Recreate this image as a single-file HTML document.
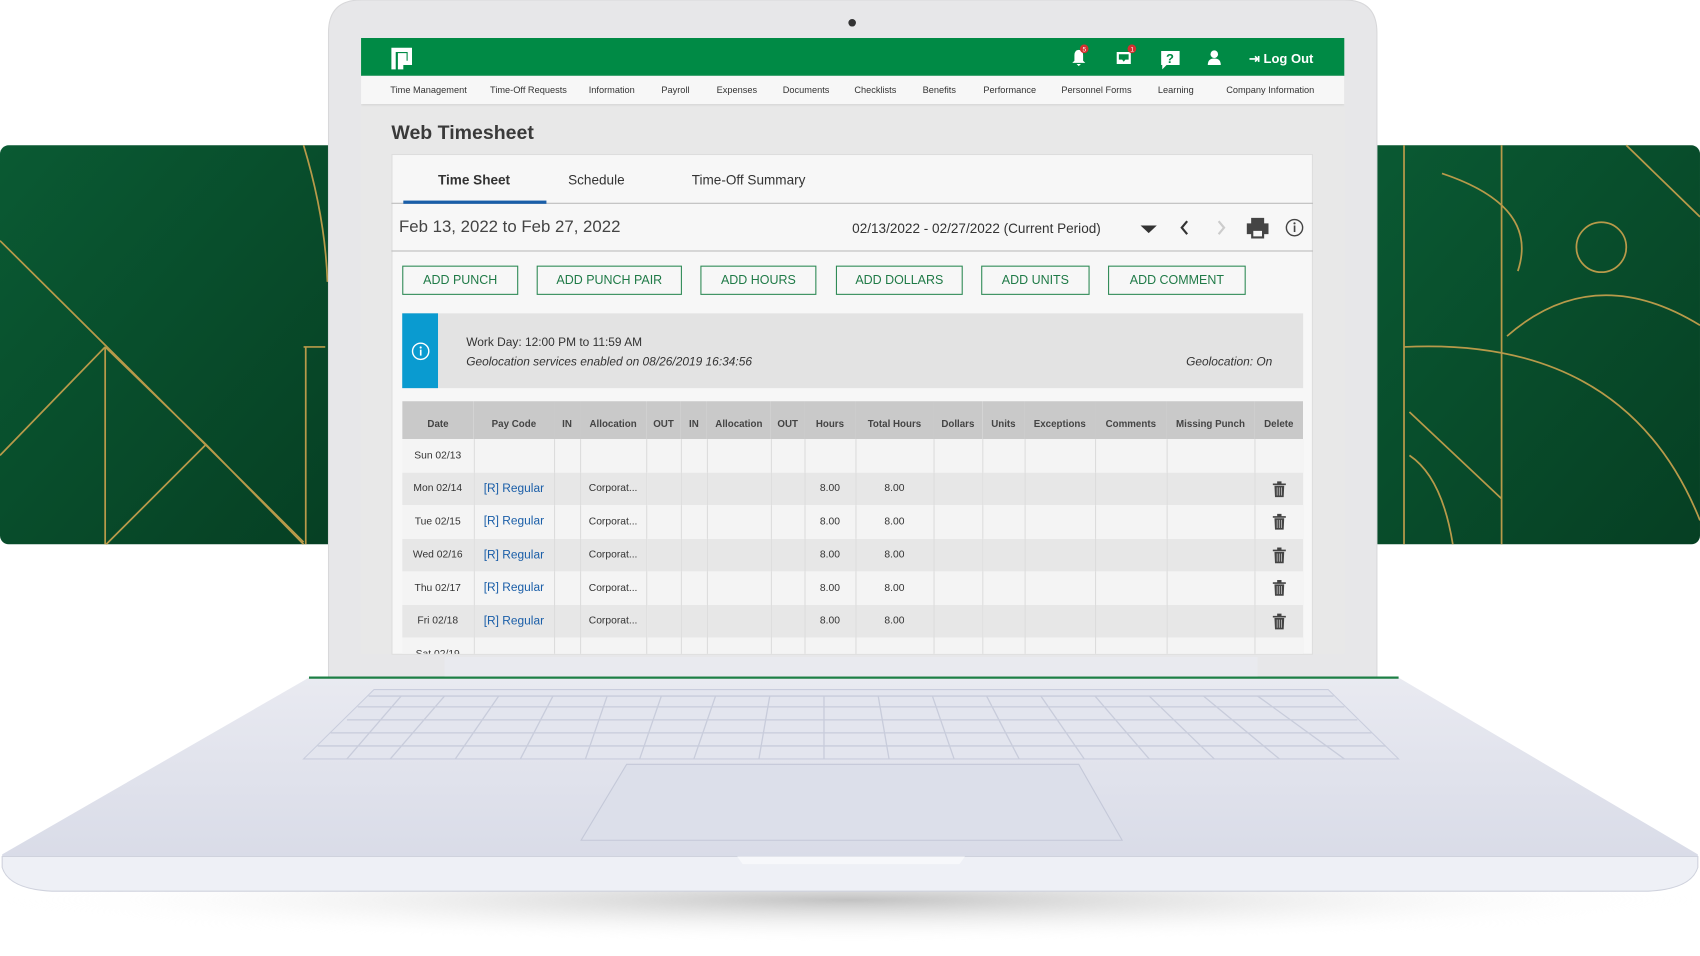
<!DOCTYPE html>
<html><head><meta charset="utf-8"><style>
html,body{margin:0;padding:0;background:#fff;overflow:hidden}
body{width:1700px;height:956px;position:relative}
#w{position:absolute;left:0;top:0;width:1568px;height:882px;transform:scale(1.08418);transform-origin:0 0;font-family:"Liberation Sans",Arial,sans-serif;color:#333}
.a{position:absolute}
.nav span{position:absolute;top:0;font-size:8.5px;color:#333;white-space:nowrap}
.btn{position:absolute;top:245px;height:27px;border:1px solid #2e8a55;box-sizing:border-box;color:#1f7a47;font-size:11.5px;text-align:center;line-height:26px;background:#f7f7f7}
table{border-collapse:collapse;position:absolute;left:371px;top:370px;width:831px;table-layout:fixed;font-size:9.5px}
td,th{border-right:1px solid #dcdcdc;padding:0;text-align:center;white-space:nowrap;overflow:hidden}
th{background:#c9c9c9;height:28px;font-weight:bold;color:#444;font-size:9px;border-right:none;padding-top:7px;box-sizing:content-box}
tr.o td{background:#f4f4f4}tr.e td{background:#e7e7e7}
td{height:30.5px;color:#333}
td.l{color:#1a5ea8;font-size:11px}
.t{display:inline-block;vertical-align:middle}
</style></head><body><div id="w">
<svg class="a" style="left:0;top:0" width="1568" height="882">
<defs>
<linearGradient id="g" x1="0" y1="0" x2="1" y2="1"><stop offset="0" stop-color="#0a5a33"/><stop offset="1" stop-color="#063f23"/></linearGradient>
<linearGradient id="b" x1="0" y1="0" x2="0" y2="1"><stop offset="0" stop-color="#e9eaf1"/><stop offset="1" stop-color="#d6d9e6"/></linearGradient>
<radialGradient id="sh" cx="0.5" cy="0.5" r="0.5"><stop offset="0" stop-color="#999" stop-opacity=".6"/><stop offset="1" stop-color="#fff" stop-opacity="0"/></radialGradient>
</defs>
<rect x="0" y="134" width="320" height="368" rx="8" fill="url(#g)"/>
<rect x="1250" y="134" width="318" height="368" rx="8" fill="url(#g)"/>
<g stroke="#b89a4a" stroke-width="1.6" fill="none">
<path d="M0 222 L280 500 M97 320 L97 502 M0 420 L97 320 M97 320 L190 410 L98 502 M190 410 L280 502 M280 320 L300 320 M282 320 L282 502 M280 134 Q300 200 302 260"/>
<path d="M1295 134 L1295 502 M1385 134 L1385 502 M1295 320 Q1500 310 1568 480 M1300 380 L1385 460 M1390 310 Q1470 240 1568 300 M1330 160 Q1420 190 1400 250 M1300 420 Q1330 440 1340 502 M1500 134 L1568 200"/>
<circle cx="1477" cy="228" r="23"/>
</g>
<ellipse cx="784" cy="830" rx="780" ry="40" fill="url(#sh)"/>
<path d="M303 30 Q303 0 333 0 L1240 0 Q1270 0 1270 30 L1270 625 L303 625 Z" fill="#e7e7e9" stroke="#d8d8da"/>
<circle cx="786" cy="21" r="3.5" fill="#333"/>
<path d="M285 625 L1290 625 L1566 788 L1566 800 Q1560 820 1520 822 L48 822 Q8 820 2 800 L2 788 Z" fill="url(#b)"/>
<path d="M2 790 L1566 790 L1566 800 Q1560 820 1520 822 L48 822 Q8 820 2 800 Z" fill="#eef0f6" stroke="#cfd2dd"/>
<path d="M680 790 L890 790 L885 797 L685 797 Z" fill="#f7f8fb"/>
<path d="M285 625 L1290 625" stroke="#1d7f45" stroke-width="2"/>
<rect x="410" y="606" width="750" height="18" fill="#e9eaef"/>
<path d="M345 636 L1225 636 L1290 700 L280 700 Z" fill="#e3e5ee" stroke="#c9cddd"/>
<g stroke="#c8ccdb" stroke-width="1.2">
<path d="M340 642 L1230 642 M330 652 L1240 652 M320 664 L1252 664 M305 676 L1265 676 M293 688 L1278 688"/>
<path d="M370 642 L320 700 M410 642 L360 700 M460 642 L420 700 M510 642 L480 700 M560 642 L540 700 M610 642 L590 700 M660 642 L640 700 M710 642 L700 700 M760 642 L760 700 M810 642 L820 700 M860 642 L880 700 M910 642 L940 700 M960 642 L1000 700 M1010 642 L1060 700 M1060 642 L1120 700 M1110 642 L1180 700 M1160 642 L1240 700"/>
</g>
<path d="M578 705 L995 705 L1035 775 L536 775 Z" fill="#dcdfea" stroke="#c4c8d8"/>
</svg>
<div class="a" style="left:333px;top:35px;width:907px;height:568px;background:#e8e8e8;overflow:hidden">
 <div class="a" style="left:0;top:0;width:907px;height:35px;background:#008a45"></div>
 <svg class="a" style="left:27px;top:8px" width="22" height="22"><path d="M1 1 H20 V17 H12 V21 H7 V6 H15 V13 H16 V5 H5 V21 H1 Z" fill="#fff"/></svg>
 <svg class="a" style="left:650px;top:6px" width="240" height="26" fill="#fff">
  <path d="M8 10 Q8 5 12 5 Q16 5 16 10 L16 15 L18 17 L6 17 L8 15 Z M10 18 L14 18 L12 20Z"/>
  <circle cx="17" cy="4" r="4" fill="#d32f2f"/><text x="15.5" y="6.5" font-size="6" fill="#fff">5</text>
  <path d="M47 7 H60 V18 H47 Z M49 9 V14 H52 L53.5 16 L55 14 H58 V9Z" fill-rule="evenodd"/>
  <circle cx="61" cy="4" r="4" fill="#d32f2f"/><text x="59.6" y="6.5" font-size="6" fill="#fff">1</text>
  <path d="M88 6 H105 V19 H93 L89 23 V19 H88Z"/><text x="92.5" y="17" font-size="12" font-weight="bold" fill="#008a45">?</text>
  <circle cx="137" cy="9" r="3.5"/><path d="M131 19 Q131 13 137 13 Q143 13 143 19Z"/>
 </svg>
 <div class="a" style="left:819px;top:12px;color:#fff;font-size:12px;font-weight:bold">⇥ Log Out</div>
 <div class="a nav" style="left:0;top:35px;width:907px;height:26px;background:#f7f7f7;box-shadow:0 1px 2px #ccc">
  <div style="position:relative;top:8px">
  <span style="left:27px">Time Management</span><span style="left:119px">Time-Off Requests</span><span style="left:210px">Information</span><span style="left:277px">Payroll</span><span style="left:328px">Expenses</span><span style="left:389px">Documents</span><span style="left:455px">Checklists</span><span style="left:518px">Benefits</span><span style="left:574px">Performance</span><span style="left:646px">Personnel Forms</span><span style="left:735px">Learning</span><span style="left:798px">Company Information</span>
  </div>
 </div>
</div>
<div class="a" style="left:361px;top:112px;font-size:18px;font-weight:bold;color:#3a3a3a">Web Timesheet</div>
<div class="a" style="left:361px;top:142px;width:850px;height:462px;background:#f7f7f7;border:1px solid #ddd;box-sizing:border-box"></div>
<div class="a" style="left:404px;top:159px;font-size:12.5px;font-weight:bold">Time Sheet</div>
<div class="a" style="left:524px;top:159px;font-size:12.5px">Schedule</div>
<div class="a" style="left:638px;top:159px;font-size:12.5px">Time-Off Summary</div>
<div class="a" style="left:361px;top:187px;width:850px;height:1px;background:#bbb"></div>
<div class="a" style="left:372px;top:185px;width:132px;height:3px;background:#1a5ea8"></div>
<div class="a" style="left:368px;top:201px;font-size:15.5px;color:#444">Feb 13, 2022 to Feb 27, 2022</div>
<div class="a" style="left:786px;top:204px;font-size:12.5px;color:#333">02/13/2022 - 02/27/2022 (Current Period)</div>
<svg class="a" style="left:1048px;top:198px" width="160" height="26">
 <path d="M4 10 L19 10 L11.5 17Z" fill="#333"/>
 <path d="M47 6 L42 12 L47 18" stroke="#333" stroke-width="2" fill="none"/>
 <path d="M76 6 L81 12 L76 18" stroke="#ccc" stroke-width="2" fill="none"/>
 <path d="M106 3 H118 V8 H122 V18 H118 V22 H106 V18 H102 V8 H106Z M108 15 V20 H116 V15Z" fill="#444" fill-rule="evenodd"/>
 <circle cx="146" cy="12" r="7.5" fill="none" stroke="#444" stroke-width="1.3"/><rect x="145.3" y="10" width="1.5" height="6" fill="#444"/><circle cx="146" cy="8" r="1" fill="#444"/>
</svg>
<div class="a" style="left:361px;top:231px;width:850px;height:1px;background:#bbb"></div>
<div class="btn" style="left:371px;width:107px">ADD PUNCH</div>
<div class="btn" style="left:495px;width:134px">ADD PUNCH PAIR</div>
<div class="btn" style="left:646px;width:107px">ADD HOURS</div>
<div class="btn" style="left:771px;width:117px">ADD DOLLARS</div>
<div class="btn" style="left:905px;width:100px">ADD UNITS</div>
<div class="btn" style="left:1022px;width:127px">ADD COMMENT</div>
<div class="a" style="left:371px;top:289px;width:831px;height:69px;background:#e3e3e3"></div>
<div class="a" style="left:371px;top:289px;width:33px;height:69px;background:#0a9bd0"></div>
<svg class="a" style="left:378px;top:315px" width="20" height="20"><circle cx="10" cy="9" r="7.5" fill="none" stroke="#fff" stroke-width="1.3"/><rect x="9.3" y="7.5" width="1.5" height="5.5" fill="#fff"/><circle cx="10" cy="5.5" r="1" fill="#fff"/></svg>
<div class="a" style="left:430px;top:310px;font-size:11px">Work Day: 12:00 PM to 11:59 AM</div>
<div class="a" style="left:430px;top:328px;font-size:11px;font-style:italic">Geolocation services enabled on 08/26/2019 16:34:56</div>
<div class="a" style="left:1094px;top:328px;font-size:11px;font-style:italic">Geolocation: On</div>
<div class="a" style="left:371px;top:370px;width:831px;height:233px;overflow:hidden">
<table style="left:0;top:0">
<colgroup><col style="width:66px"><col style="width:74px"><col style="width:24px"><col style="width:61px"><col style="width:32px"><col style="width:24px"><col style="width:59px"><col style="width:31px"><col style="width:47px"><col style="width:72px"><col style="width:45px"><col style="width:39px"><col style="width:65px"><col style="width:66px"><col style="width:81px"><col style="width:45px"></colgroup>
<tr><th>Date</th><th>Pay Code</th><th>IN</th><th>Allocation</th><th>OUT</th><th>IN</th><th>Allocation</th><th>OUT</th><th>Hours</th><th>Total Hours</th><th>Dollars</th><th>Units</th><th>Exceptions</th><th>Comments</th><th>Missing Punch</th><th>Delete</th></tr>
<tr class="o"><td>Sun 02/13</td><td></td><td></td><td></td><td></td><td></td><td></td><td></td><td></td><td></td><td></td><td></td><td></td><td></td><td></td><td></td></tr>
<tr class="e"><td>Mon 02/14</td><td class="l">[R] Regular</td><td></td><td>Corporat...</td><td></td><td></td><td></td><td></td><td>8.00</td><td>8.00</td><td></td><td></td><td></td><td></td><td></td><td><svg class="t" width="14" height="16"><path d="M1 3 H13 V4.5 H1Z M5 1 H9 V3 H5Z M2.5 5 H11.5 L11 15.5 H3Z" fill="#444"/><path d="M5 6.5 V14 M7 6.5 V14 M9 6.5 V14" stroke="#bbb" stroke-width=".8"/></svg></td></tr>
<tr class="o"><td>Tue 02/15</td><td class="l">[R] Regular</td><td></td><td>Corporat...</td><td></td><td></td><td></td><td></td><td>8.00</td><td>8.00</td><td></td><td></td><td></td><td></td><td></td><td><svg class="t" width="14" height="16"><path d="M1 3 H13 V4.5 H1Z M5 1 H9 V3 H5Z M2.5 5 H11.5 L11 15.5 H3Z" fill="#444"/><path d="M5 6.5 V14 M7 6.5 V14 M9 6.5 V14" stroke="#bbb" stroke-width=".8"/></svg></td></tr>
<tr class="e"><td>Wed 02/16</td><td class="l">[R] Regular</td><td></td><td>Corporat...</td><td></td><td></td><td></td><td></td><td>8.00</td><td>8.00</td><td></td><td></td><td></td><td></td><td></td><td><svg class="t" width="14" height="16"><path d="M1 3 H13 V4.5 H1Z M5 1 H9 V3 H5Z M2.5 5 H11.5 L11 15.5 H3Z" fill="#444"/><path d="M5 6.5 V14 M7 6.5 V14 M9 6.5 V14" stroke="#bbb" stroke-width=".8"/></svg></td></tr>
<tr class="o"><td>Thu 02/17</td><td class="l">[R] Regular</td><td></td><td>Corporat...</td><td></td><td></td><td></td><td></td><td>8.00</td><td>8.00</td><td></td><td></td><td></td><td></td><td></td><td><svg class="t" width="14" height="16"><path d="M1 3 H13 V4.5 H1Z M5 1 H9 V3 H5Z M2.5 5 H11.5 L11 15.5 H3Z" fill="#444"/><path d="M5 6.5 V14 M7 6.5 V14 M9 6.5 V14" stroke="#bbb" stroke-width=".8"/></svg></td></tr>
<tr class="e"><td>Fri 02/18</td><td class="l">[R] Regular</td><td></td><td>Corporat...</td><td></td><td></td><td></td><td></td><td>8.00</td><td>8.00</td><td></td><td></td><td></td><td></td><td></td><td><svg class="t" width="14" height="16"><path d="M1 3 H13 V4.5 H1Z M5 1 H9 V3 H5Z M2.5 5 H11.5 L11 15.5 H3Z" fill="#444"/><path d="M5 6.5 V14 M7 6.5 V14 M9 6.5 V14" stroke="#bbb" stroke-width=".8"/></svg></td></tr>
<tr class="o"><td>Sat 02/19</td><td></td><td></td><td></td><td></td><td></td><td></td><td></td><td></td><td></td><td></td><td></td><td></td><td></td><td></td><td></td></tr>
</table>
</div>
</div></body></html>
